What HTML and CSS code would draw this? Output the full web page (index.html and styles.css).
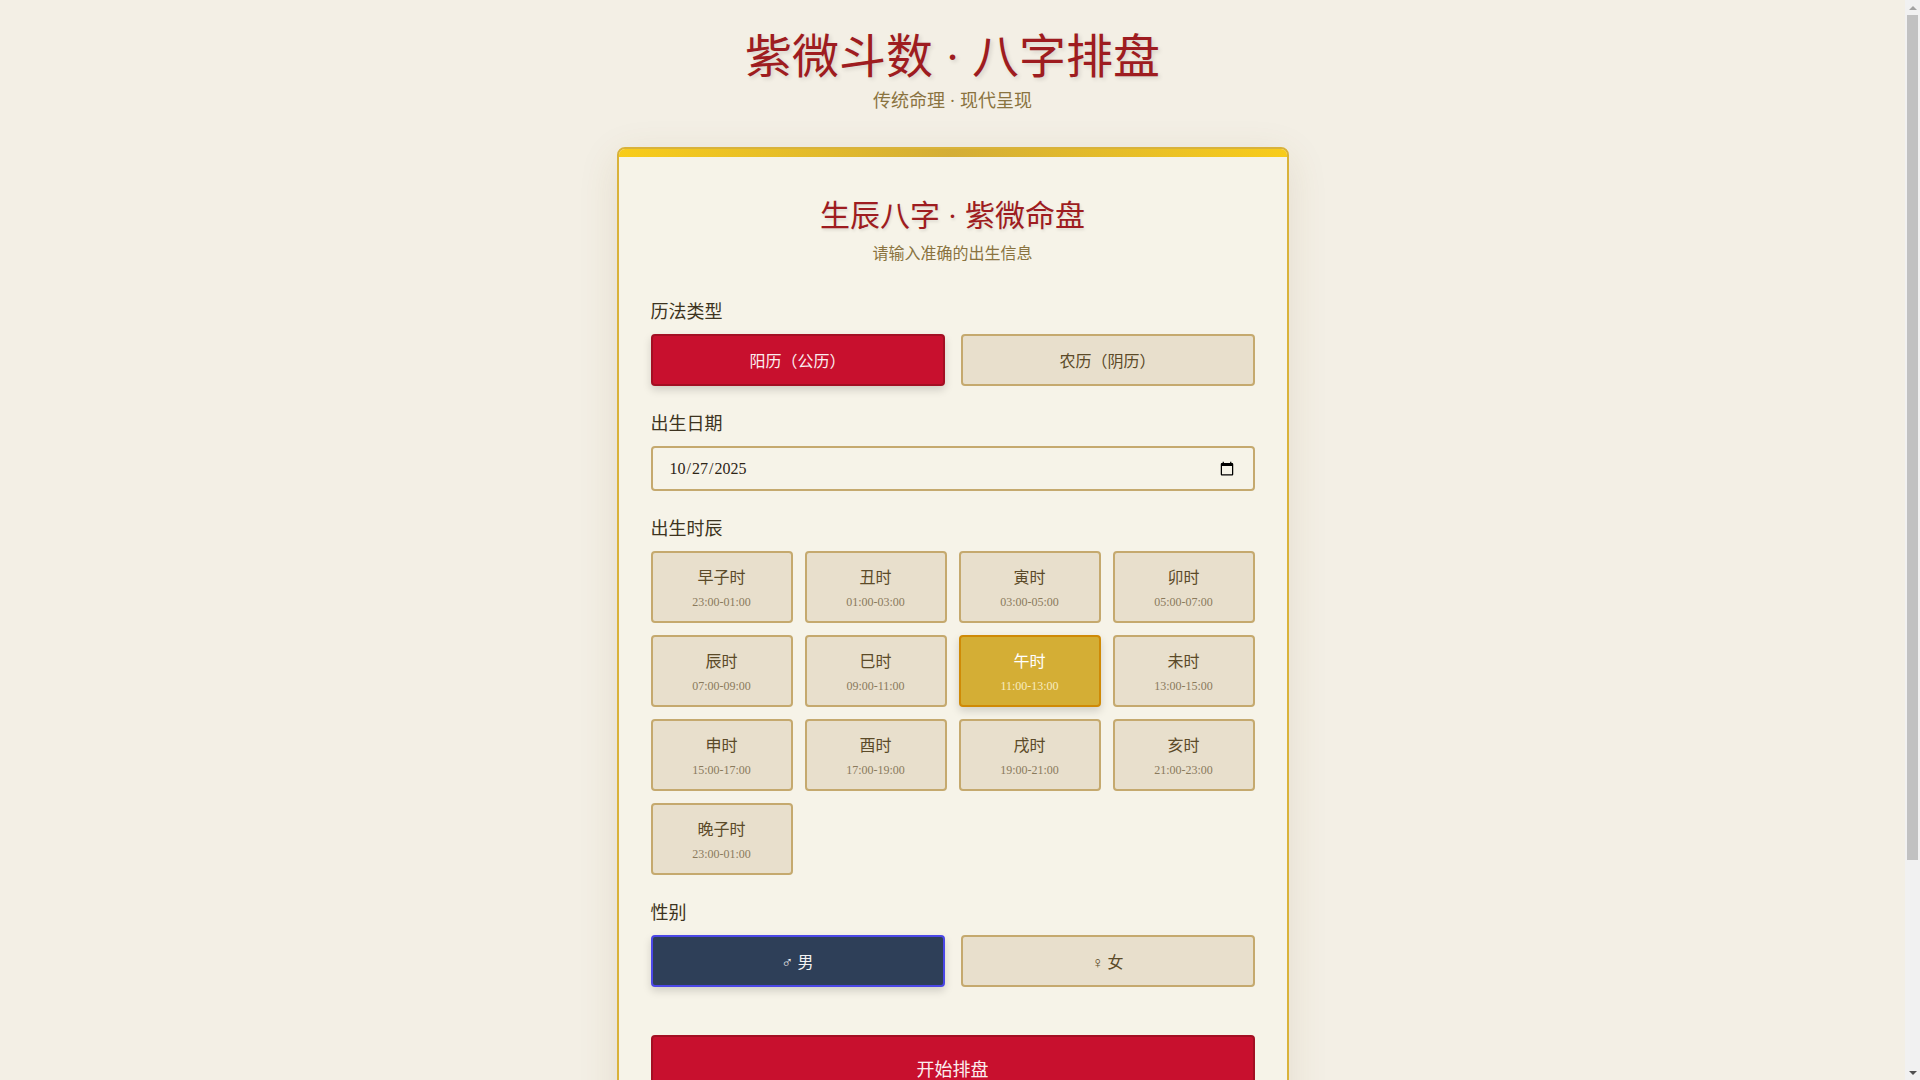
FILE: index.html
```html
<!DOCTYPE html>
<html lang="zh-CN">
<head>
    <meta charset="UTF-8">
    <meta name="viewport" content="width=device-width, initial-scale=1.0">
    <title>紫微斗数 · 八字排盘</title>
    <link rel="stylesheet" href="styles.css">
</head>
<body>
    <div class="page">
        <!-- Site header -->
        <header class="site-header">
            <h1>紫微斗数 · 八字排盘</h1>
            <p>传统命理 · 现代呈现</p>
        </header>

        <main class="card">
            <div class="card-header">
                <h2>生辰八字 · 紫微命盘</h2>
                <p>请输入准确的出生信息</p>
            </div>

            <div class="form-group">
                <label>历法类型</label>
                <div class="toggle-row">
                    <button class="toggle active-red">阳历（公历）</button>
                    <button class="toggle">农历（阴历）</button>
                </div>
            </div>

            <div class="form-group">
                <label for="birthDate">出生日期</label>
                <input type="date" id="birthDate" class="date-input" value="2025-10-27">
            </div>

            <div class="form-group">
                <label>出生时辰</label>
                <div class="hour-grid">
                    <button class="hour"><span class="hour-name">早子时</span><span class="hour-time">23:00-01:00</span></button>
                    <button class="hour"><span class="hour-name">丑时</span><span class="hour-time">01:00-03:00</span></button>
                    <button class="hour"><span class="hour-name">寅时</span><span class="hour-time">03:00-05:00</span></button>
                    <button class="hour"><span class="hour-name">卯时</span><span class="hour-time">05:00-07:00</span></button>
                    <button class="hour"><span class="hour-name">辰时</span><span class="hour-time">07:00-09:00</span></button>
                    <button class="hour"><span class="hour-name">巳时</span><span class="hour-time">09:00-11:00</span></button>
                    <button class="hour selected"><span class="hour-name">午时</span><span class="hour-time">11:00-13:00</span></button>
                    <button class="hour"><span class="hour-name">未时</span><span class="hour-time">13:00-15:00</span></button>
                    <button class="hour"><span class="hour-name">申时</span><span class="hour-time">15:00-17:00</span></button>
                    <button class="hour"><span class="hour-name">酉时</span><span class="hour-time">17:00-19:00</span></button>
                    <button class="hour"><span class="hour-name">戌时</span><span class="hour-time">19:00-21:00</span></button>
                    <button class="hour"><span class="hour-name">亥时</span><span class="hour-time">21:00-23:00</span></button>
                    <button class="hour"><span class="hour-name">晚子时</span><span class="hour-time">23:00-01:00</span></button>
                </div>
            </div>

            <div class="form-group">
                <label>性别</label>
                <div class="toggle-row">
                    <button class="toggle active-blue">♂ 男</button>
                    <button class="toggle">♀ 女</button>
                </div>
            </div>

            <button class="submit-btn">开始排盘</button>
        </main>
    </div>

    <!-- Scrollbar strip -->
    <div class="scrollbar">
        <span class="arrow up"></span>
        <div class="track"><div class="thumb"></div></div>
        <span class="arrow down"></span>
    </div>
</body>
</html>
```

FILE: styles.css
```css
/* Page */
html, body {
    height: 100%;
    overflow: hidden;
}

body {
    margin: 0;
    padding: 0;
    display: flex;
    background-color: #f3efe5;
    font-family: "Liberation Serif", "Noto Sans CJK SC", serif;
    color: #3d3320;
}

.page {
    flex: 1;
    height: 100vh;
    box-sizing: border-box;
    overflow-y: auto;
    padding: 29px 20px 196px;
}

/* Scrollbar strip */
.scrollbar {
    width: 15px;
    height: 100vh;
    display: flex;
    flex-direction: column;
    background: #f1f1f1;
}

.arrow {
    height: 15px;
    display: flex;
    align-items: center;
    justify-content: center;
}

.arrow::before {
    content: "";
    border-left: 4px solid transparent;
    border-right: 4px solid transparent;
}

.arrow.up::before {
    border-bottom: 4px solid #a3a3a3;
}

.arrow.down::before {
    border-top: 4px solid #505050;
}

.track {
    flex: 1;
    padding: 0 2px;
}

.thumb {
    height: 845px;
    background: #c1c1c1;
}

/* Header */
.site-header {
    text-align: center;
    margin-bottom: 32px;
}

.site-header h1 {
    margin: 0;
    font-size: 47px;
    font-weight: normal;
    line-height: 1.2;
    color: #9e1c20;
    text-shadow: 2px 2px 4px rgba(0, 0, 0, 0.12);
}

.site-header p {
    margin: 3px 0 0;
    font-size: 18px;
    line-height: 1.5;
    color: #8a7340;
}

/* Card */
.card {
    position: relative;
    max-width: 604px;
    margin: 0 auto;
    padding: 49px 32px 32px;
    background: #f6f3e8;
    border: 2px solid #d9b23a;
    border-radius: 8px;
    box-shadow: 0 10px 40px rgba(120, 90, 30, 0.12);
    overflow: hidden;
}

.card::before {
    content: "";
    position: absolute;
    top: 0;
    left: 0;
    right: 0;
    height: 8px;
    background: linear-gradient(90deg, #f8cc1a, #d4ae37 50%, #f8cc1a);
}

.card-header {
    text-align: center;
    margin-bottom: 33px;
}

.card-header h2 {
    margin: 0;
    font-size: 30px;
    font-weight: normal;
    line-height: 1.2;
    color: #9e1c20;
    text-shadow: 1px 2px 3px rgba(0, 0, 0, 0.1);
}

.card-header p {
    margin: 8px 0 0;
    font-size: 16px;
    line-height: 1.5;
    color: #8a7340;
}

/* Form groups */
.form-group {
    margin-bottom: 25px;
}

.form-group label {
    display: block;
    margin-bottom: 8px;
    font-size: 18px;
    line-height: 1.5;
    color: #3d3320;
}

.toggle-row {
    display: grid;
    grid-template-columns: 1fr 1fr;
    gap: 16px;
}

.toggle {
    height: 52px;
    font-family: inherit;
    font-size: 16px;
    color: #5b4a28;
    background: #e8dfcc;
    border: 2px solid #c5a96e;
    border-radius: 4px;
    cursor: pointer;
}

.toggle.active-red {
    background: #c8102e;
    border-color: #a30f23;
    color: #fbeef0;
    box-shadow: 0 4px 8px rgba(0, 0, 0, 0.15);
}

.toggle.active-blue {
    background: #2e3f58;
    border-color: #4b47e6;
    color: #f2f2f2;
    box-shadow: 0 4px 8px rgba(0, 0, 0, 0.15);
}

.date-input {
    display: block;
    width: 100%;
    height: 45px;
    box-sizing: border-box;
    padding: 0 16px;
    font-family: inherit;
    font-size: 16px;
    color: #2d2416;
    background: #f6f3e8;
    border: 2px solid #c5a96e;
    border-radius: 4px;
}

/* Hour grid */
.hour-grid {
    display: grid;
    grid-template-columns: repeat(4, 1fr);
    gap: 12px;
}

.hour {
    height: 72px;
    display: flex;
    flex-direction: column;
    align-items: center;
    justify-content: center;
    gap: 7px;
    font-family: inherit;
    background: #e8dfcc;
    border: 2px solid #c5a96e;
    border-radius: 4px;
    cursor: pointer;
}

.hour-name {
    font-size: 16px;
    color: #5b4a28;
}

.hour-time {
    font-size: 12px;
    color: #8a7a5c;
}

.hour.selected {
    background: #d4ae35;
    border-color: #cf8a06;
    box-shadow: 0 4px 8px rgba(0, 0, 0, 0.15);
}

.hour.selected .hour-name {
    color: #fff;
}

.hour.selected .hour-time {
    color: #f8ecc0;
}

/* Submit */
.submit-btn {
    display: block;
    width: 100%;
    height: 66px;
    margin-top: 48px;
    font-family: inherit;
    font-size: 18px;
    color: #fbeef0;
    background: #c8102e;
    border: 2px solid #a30f23;
    border-radius: 4px;
    cursor: pointer;
}
```
